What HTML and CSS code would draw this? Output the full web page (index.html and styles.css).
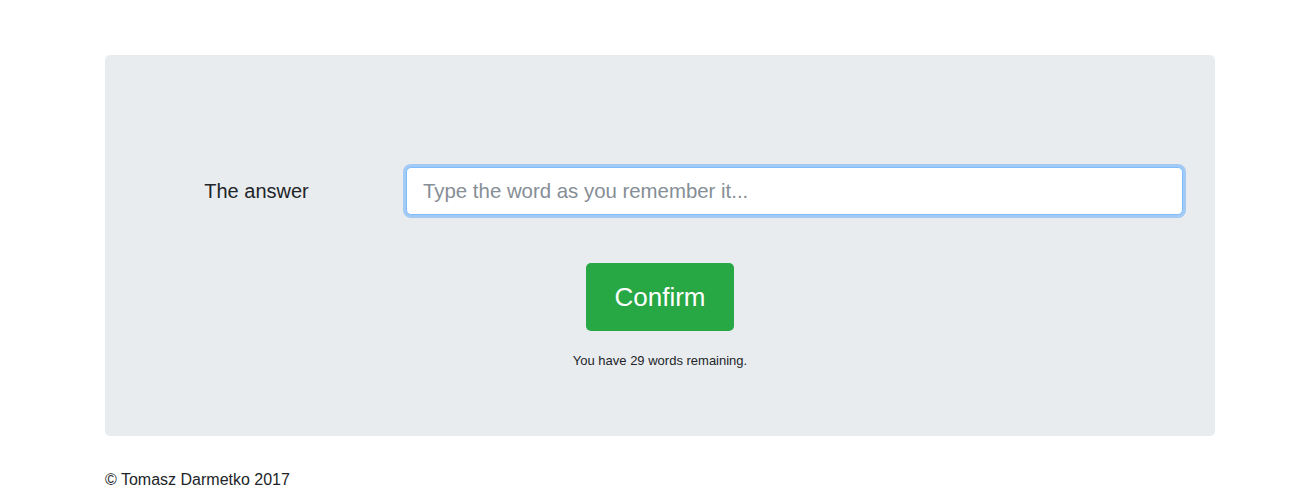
FILE: index.html
```html
<!DOCTYPE html>
<html>
<head>
<meta charset="utf-8">
<link rel="stylesheet" href="styles.css">
</head>
<body>
<div class="container">
  <div class="jumbotron">
    <form class="quiz">
      <div class="row">
        <label class="label" for="answer">The answer</label>
        <div class="field">
          <input id="answer" class="input" type="text" placeholder="Type the word as you remember it...">
        </div>
      </div>
      <div class="actions">
        <button type="button" class="btn">Confirm</button>
        <p class="remaining">You have 29 words remaining.</p>
      </div>
    </form>
  </div>
  <footer class="footer">© Tomasz Darmetko 2017</footer>
</div>
</body>
</html>
```

FILE: styles.css
```css
* { box-sizing: border-box; }
html, body { margin: 0; padding: 0; }
body {
  font-family: "Liberation Sans", Arial, sans-serif;
  font-size: 16px;
  line-height: 1.5;
  color: #212529;
  background: #fff;
}
.container {
  width: 1110px;
  margin: 55px 0 0 105px;
}
.jumbotron {
  background: #e9ecef;
  border-radius: 5px;
  padding: 112px 17px 66px;
  height: 381px;
}
.row {
  display: flex;
  align-items: center;
}
.label {
  width: 269px;
  text-align: center;
  font-size: 20px;
  line-height: 30px;
  color: #212529;
}
.field {
  flex: 1;
  padding: 0 15px;
}
.input {
  display: block;
  width: 100%;
  height: 48px;
  padding: 8px 16px;
  font-family: inherit;
  font-size: 20.4px;
  line-height: 30px;
  color: #495057;
  background: #fff;
  border: 1px solid #80bdff;
  border-radius: 5px;
  box-shadow: 0 0 0 3px rgba(0, 123, 255, 0.3);
  outline: none;
}
.input::placeholder { color: #868e96; }
.actions {
  display: flex;
  flex-direction: column;
  align-items: center;
  margin-top: 48px;
}
.btn {
  font-family: inherit;
  font-size: 26px;
  line-height: 36px;
  height: 68px;
  width: 148px;
  padding: 16px 0;
  color: #fff;
  background: #28a745;
  border: none;
  border-radius: 5px;
}
.remaining {
  margin: 21px 0 0;
  font-size: 13px;
  line-height: 18px;
  color: #212529;
}
.footer {
  margin-top: 32px;
  font-size: 16px;
  line-height: 24px;
}
```
